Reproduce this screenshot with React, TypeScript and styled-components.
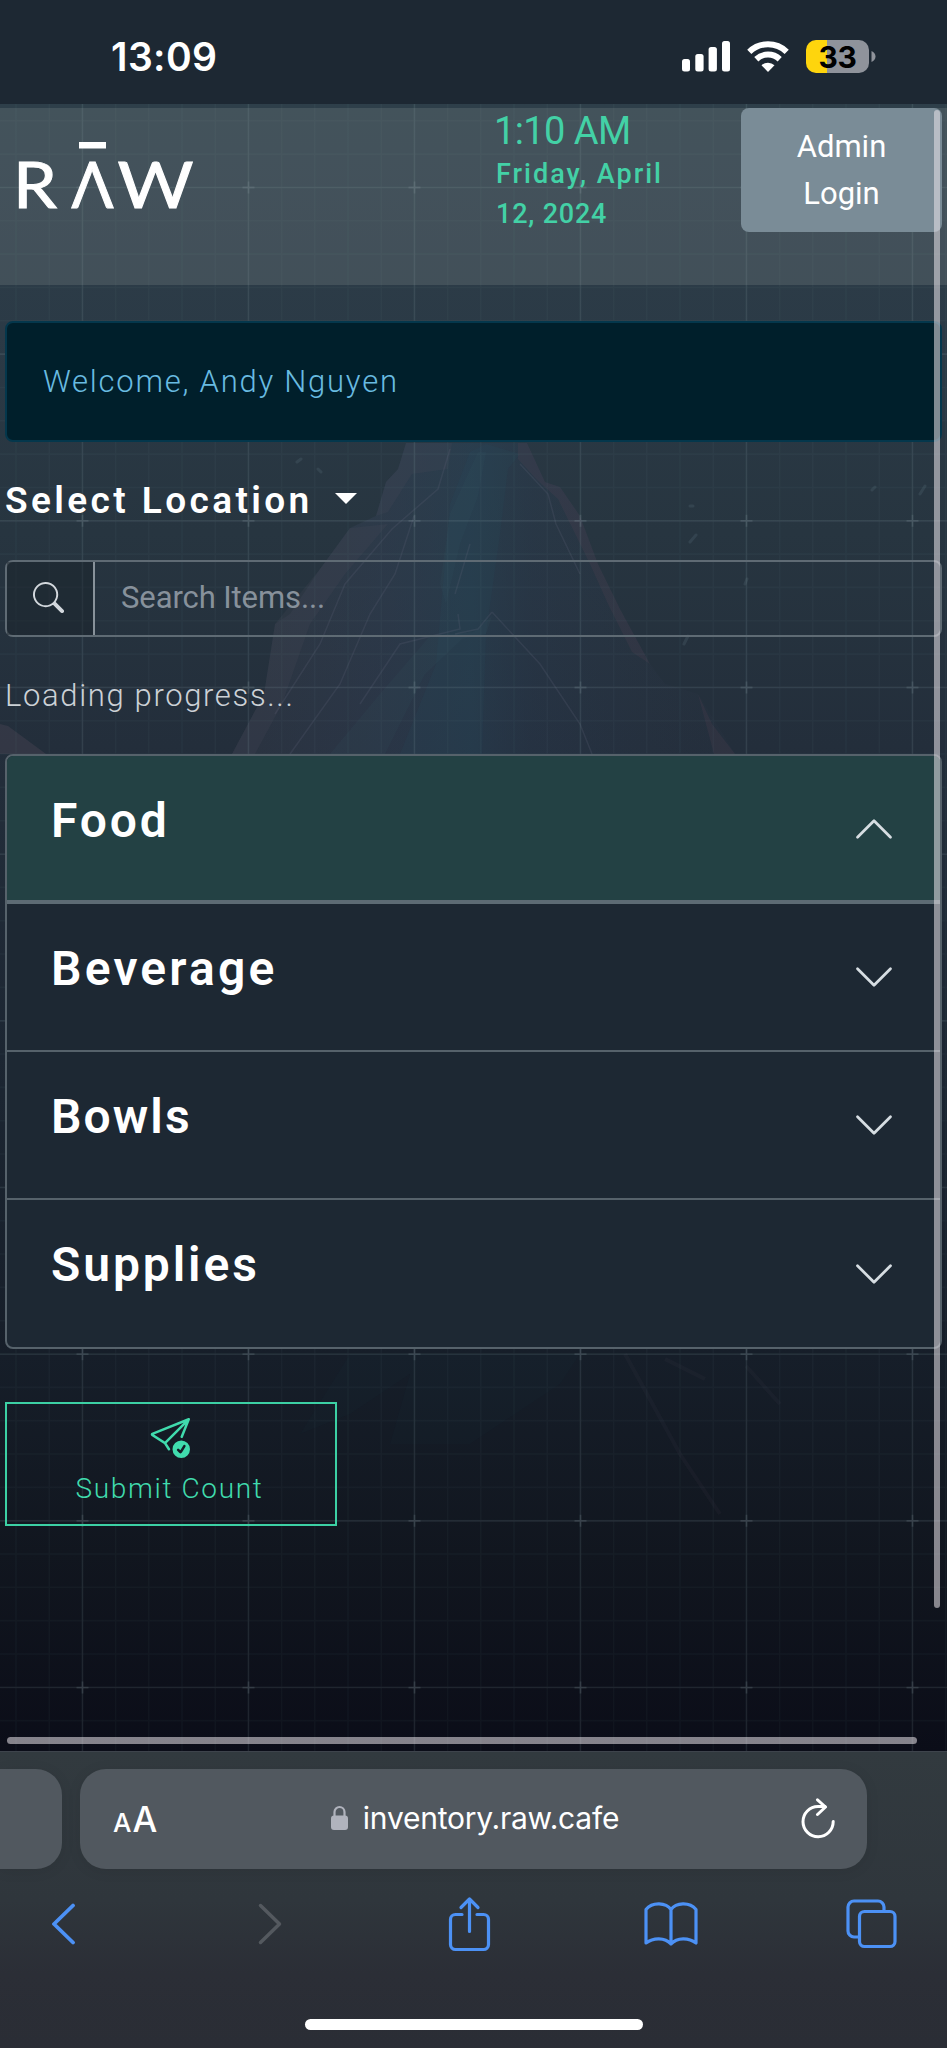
import React from "react";
import styled, { createGlobalStyle } from "styled-components";
import { BsSearch, BsSendCheck, BsChevronDown, BsChevronUp } from "react-icons/bs";

const GlobalStyle = createGlobalStyle`
  * { box-sizing: border-box; }
  body { margin: 0; background: #0c0f19; overflow: hidden; }
  p, h1, h2 { margin: 0; }
  button { font: inherit; border: 0; background: none; padding: 0; }
  svg { display: block; flex: none; }
`;

const Phone = styled.div`
  width: 947px;
  height: 2048px;
  display: flex;
  flex-direction: column;
  overflow: hidden;
  color: #fff;
  font-family: Roboto, "Liberation Sans", sans-serif;
`;

/* ---------- status bar ---------- */

const StatusBar = styled.header`
  height: 104px;
  flex: none;
  display: flex;
  align-items: center;
  padding: 8px 71px 0 111px;
  background: #1d2833;
  font-family: Inter, sans-serif;
`;

const StatusTime = styled.span`
  font-size: 39px;
  font-weight: 600;
  letter-spacing: 0.4px;
  line-height: 48px;
  margin: 2px auto 0 0;
`;

const StatusIcons = styled.div`
  display: flex;
  align-items: center;
  gap: 17px;
`;

const Battery = styled.div`
  display: flex;
  align-items: center;
  gap: 2px;
`;

const BatteryBody = styled.div`
  width: 63px;
  height: 33px;
  border-radius: 10px;
  background: linear-gradient(90deg, #fed50d 21px, #8f939b 21px);
  color: #000;
  font-size: 30px;
  font-weight: 700;
  letter-spacing: -0.4px;
  line-height: 34px;
  text-align: center;
`;

/* ---------- web page ---------- */

const Viewport = styled.main`
  position: relative;
  height: 1647px;
  flex: none;
  padding-top: 4px;
  overflow: hidden;
  background: linear-gradient(180deg, #2e3f4a 0%, #2b3a46 14%, #273540 26%, #232e3b 39%, #1b2531 60%, #161e29 76%, #11161f 88%, #0b0d18 100%);
`;

const Backdrop = styled.svg`
  position: absolute;
  inset: 0;
`;

const Page = styled.div`
  position: relative;
  display: flex;
  flex-direction: column;
`;

const NavBar = styled.nav`
  height: 177px;
  display: flex;
  align-items: flex-start;
  padding-right: 5px;
  background: rgba(145, 155, 155, 0.22);
`;

const Clock = styled.div`
  width: 180px;
  margin: 0 auto 0 294px;
  color: #43d1a6;
`;

const ClockTime = styled.p`
  font-size: 38px;
  line-height: 46px;
  letter-spacing: -0.6px;
  margin-left: -2px;
`;

const ClockDate = styled.p<{ $tight?: boolean }>`
  font-size: 27px;
  font-weight: 500;
  line-height: 40px;
  letter-spacing: ${(p) => (p.$tight ? "0.8px" : "2px")};
  white-space: nowrap;
`;

const AdminButton = styled.button`
  width: 201px;
  height: 124px;
  padding: 0 50px 1px;
  border-radius: 8px;
  background: #7a8c97;
  color: #fff;
  font-size: 31px;
  line-height: 47px;
`;

const Alert = styled.section`
  height: 121px;
  margin: 36px 5px 0;
  padding-left: 36px;
  display: flex;
  align-items: center;
  border: 2px solid #04374c;
  border-radius: 8px;
  background: #001f2b;
  color: #69bbe1;
  font-size: 31px;
  font-weight: 300;
  letter-spacing: 1.76px;
`;

const LocationSelect = styled.button`
  height: 60px;
  margin: 28px 5px 0;
  display: flex;
  align-items: center;
  gap: 22px;
  color: #fff;
  font-size: 37px;
  font-weight: 600;
  letter-spacing: 3.4px;
`;

const Caret = styled.span`
  border: 11px solid transparent;
  border-top-color: #fff;
  border-bottom: 0;
  margin-bottom: 3px;
`;

const SearchBox = styled.div`
  height: 77px;
  margin: 30px 5px 0;
  display: flex;
  border: 2px solid #5f6b74;
  border-radius: 8px;
  color: #87919b;
  font-size: 31px;
`;

const SearchIcon = styled.span`
  width: 88px;
  display: grid;
  place-items: center;
  padding-right: 3px;
  padding-bottom: 2px;
  border-right: 2px solid #88929a;
  background: rgba(25, 33, 41, 0.45);
  color: #d3d8dd;
`;

const SearchText = styled.span`
  padding-left: 26px;
  line-height: 72px;
  letter-spacing: -0.1px;
`;

const Progress = styled.p`
  height: 40px;
  margin: 39px 5px 0;
  color: #ccd1d6;
  font-size: 31px;
  font-weight: 300;
  line-height: 40px;
  letter-spacing: 1.65px;
`;

const Accordion = styled.section`
  margin: 38px 5px 0;
  border: 2px solid #56626b;
  border-radius: 8px;
  overflow: hidden;
  background: #1d2833;
`;

const AccordionRow = styled.div<{ $open?: boolean }>`
  height: 148px;
  padding: 0 44px;
  display: flex;
  align-items: center;
  justify-content: space-between;
  border-bottom: ${(p) => (p.$open ? "4px solid #5d6b74" : "2px solid #56626b")};
  background: ${(p) => (p.$open ? "#234144" : "transparent")};
  color: #d6dde2;

  &:first-child { padding-top: 2px; }
  &:last-child { height: 147px; border-bottom: 0; }
`;

const RowTitle = styled.h2<{ $spacing: number }>`
  color: #fff;
  font-size: 48px;
  font-weight: 600;
  line-height: 54px;
  margin-bottom: 17px;
  letter-spacing: ${(p) => p.$spacing}px;
`;

const SubmitButton = styled.button`
  width: 332px;
  height: 124px;
  margin: 53px 5px 0;
  display: flex;
  flex-direction: column;
  align-items: center;
  padding: 14px 3px 0 0;
  border: 2px solid #3cd0a4;
  color: #40dbad;
  font-size: 28px;
  font-weight: 300;
  line-height: 36px;
  letter-spacing: 1.65px;

  svg { margin-bottom: 13px; }
`;

const ScrollThumb = styled.div<{ $axis: "x" | "y" }>`
  position: absolute;
  border-radius: 4px;
  background: rgba(235, 230, 235, 0.55);
  ${(p) =>
    p.$axis === "y"
      ? "right: 7px; top: 6px; width: 6px; height: 1498px;"
      : "left: 7px; bottom: 7px; width: 910px; height: 7px;"}
`;

/* ---------- browser chrome ---------- */

const BrowserBar = styled.footer`
  height: 297px;
  flex: none;
  display: flex;
  flex-direction: column;
  border-top: 1px solid #3e444c;
  background: linear-gradient(180deg, #323a3f 0%, #2f363c 50%, #2b2e36 75%, #2a2d35 100%);
`;

const TabStrip = styled.div`
  display: flex;
  gap: 18px;
  margin-top: 17px;
`;

const NextTab = styled.div`
  width: 62px;
  height: 100px;
  border-radius: 0 26px 26px 0;
  background: #51585f;
  box-shadow: 0 2px 14px rgba(0, 0, 0, 0.08);
`;

const AddressBar = styled.div`
  width: 787px;
  height: 100px;
  display: flex;
  align-items: center;
  justify-content: space-between;
  padding: 0 32px 0 33px;
  border-radius: 26px;
  background: #51585f;
  box-shadow: 0 2px 14px rgba(0, 0, 0, 0.08);
  font-family: Inter, sans-serif;
`;

const TextSize = styled.span`
  width: 49px;
  display: flex;
  align-items: baseline;
  font-size: 35px;
  line-height: 40px;
  font-weight: 500;
  margin-top: 3px;

  small { font-size: 26px; margin-right: 1px; }
`;

const Url = styled.span`
  display: flex;
  align-items: center;
  gap: 15px;
  font-size: 30px;
  letter-spacing: -0.24px;
  line-height: 40px;
  margin: 0 13px 3px 0;
`;

const Toolbar = styled.div`
  display: grid;
  grid-template-columns: repeat(5, 202px);
  justify-content: center;
  justify-items: center;
  align-items: center;
  height: 64px;
  margin: 23px 0 0 -9px;
  color: #4c91f5;
`;

const HomeIndicator = styled.div`
  width: 338px;
  height: 11px;
  margin: 63px auto 0;
  border-radius: 6px;
  background: #fff;
`;

/* ---------- drawings ---------- */

const range = (start: number, step: number, end: number) => {
  const out: number[] = [];
  for (let v = start; v < end; v += step) out.push(v);
  return out;
};

const majorX = range(82.5, 166, 947);
const majorY = range(83.5, 166.67, 1647);

function GridBackdrop() {
  return (
    <Backdrop width="947" height="1647" viewBox="0 0 947 1647">
      <defs>
        <linearGradient id="rock" gradientUnits="userSpaceOnUse" x1="260" y1="470" x2="700" y2="470">
          <stop offset="0" stopColor="#46485a" stopOpacity=".2" />
          <stop offset=".28" stopColor="#3a4660" stopOpacity=".3" />
          <stop offset=".48" stopColor="#2c4a62" stopOpacity=".34" />
          <stop offset=".62" stopColor="#2c3c54" stopOpacity=".28" />
          <stop offset="1" stopColor="#30384a" stopOpacity=".12" />
        </linearGradient>
      </defs>
      <path
        d="M406 339 398 365 386 378 376 412 350 424 320 465 290 510 275 520 264 590 232 650H735L698 590 665 580 650 560 620 505 598 460 580 412 560 383 545 378 527 339Z"
        fill="url(#rock)"
      />
      <path d="M406 339 398 365 386 378 376 412 388 408 412 370 448 365 452 339ZM350 424 320 465 275 520 264 590 232 650H255L282 600 310 520 345 470 388 420Z" fill="#4b4a5c" opacity=".2" />
      <path d="M470 348 450 400 436 560 400 650H482L486 530 500 430 508 365 520 350 486 340Z" fill="#25586c" opacity=".1" />
      <path d="M478 348H486L478 392 460 440 446 500 440 480 450 410ZM492 512 474 528 430 532 380 590 330 650H385L425 570 462 535 486 530Z" fill="#3c6470" opacity=".1" />
      <path d="M527 339 545 378 560 383 580 412 598 460 620 505 650 560 632 548 608 500 590 460 558 395 536 375 518 355V339ZM698 590 712 620 735 650H714Z" fill="#65465a" opacity=".17" />
      <path d="M0 620 8 622 46 650H0Z" fill="#4c4654" opacity=".4" />
      <path
        d="M450 345 438 385 392 425 345 480 320 540 275 610M414 412 395 470 370 510 340 580 290 650M470 440 455 490M458 510 460 525 400 540 360 600M492 508 540 560 580 620 592 650M492 508 478 525 455 530M520 360 548 390 556 420 580 470"
        stroke="#5a6074"
        fill="none"
        opacity=".24"
        strokeWidth="1.5"
      />
      <path d="M297 358l4-3M318 365l3 3M684 540l4-8M690 438l6-7M690 402h3M745 480l2-5M920 390l5-8M872 386l3-3" stroke="#5a6f7c" opacity=".25" strokeWidth="3" strokeLinecap="round" />
      <path d="M625 1250 680 1350 720 1410M665 1255 705 1275M746 1262 780 1300" stroke="#8a7080" fill="none" strokeWidth="4" opacity=".05" />
      <path d="M350 1250 300 1330 350 1310 410 1270 390 1340 470 1340 560 1280 580 1250Z" fill="#2c6070" opacity=".03" />
      <path
        d={
          range(16, 33.2, 947).map((x) => `M${x} 0V1647`).join("") +
          range(16.8, 33.33, 1647).map((y) => `M0 ${y}H947`).join("")
        }
        stroke="rgba(150,175,190,0.045)"
        strokeWidth="1.6"
      />
      <path
        d={majorX.map((x) => `M${x} 0V1647`).join("") + majorY.map((y) => `M0 ${y}H947`).join("")}
        stroke="rgba(160,180,190,0.1)"
        strokeWidth="1.6"
      />
      <path
        d={majorX.map((x) => majorY.map((y) => `M${x - 6} ${y}h12M${x} ${y - 6}v12`).join("")).join("")}
        stroke="rgba(170,185,195,0.16)"
        strokeWidth="1.8"
      />
    </Backdrop>
  );
}

const Logo = styled.svg`
  margin: 22px 0 0 0;
  font-family: Lato, sans-serif;
`;

function RawLogo() {
  return (
    <Logo width="202" height="104" viewBox="0 130 202 104" fill="#fff" stroke="#fff" strokeWidth="1" fontSize="64">
      <rect x="79" y="142" width="27" height="6.5" stroke="none" />
      <text x="13" y="207.5" textLength="44" lengthAdjust="spacingAndGlyphs">R</text>
      <text x="71.5" y="207.5" textLength="42" lengthAdjust="spacingAndGlyphs">Λ</text>
      <text x="117.5" y="207.5" textLength="76" lengthAdjust="spacingAndGlyphs">W</text>
    </Logo>
  );
}

function SignalIcon() {
  return (
    <svg width="48" height="31" viewBox="0 0 48 31" fill="#fff">
      <rect x="0" y="18" width="8" height="12.5" rx="2.5" />
      <rect x="13.3" y="13" width="8.3" height="17.5" rx="2.5" />
      <rect x="26.6" y="6" width="8.3" height="24.5" rx="2.5" />
      <rect x="40" y="0" width="8" height="30.5" rx="2.5" />
    </svg>
  );
}

function WifiIcon() {
  return (
    <svg width="42" height="31" viewBox="0 0 42 31" fill="none" stroke="#fff">
      <path d="M2.3 10.8A27 27 0 0 1 39.7 10.8" strokeWidth="6" />
      <path d="M9.3 18.2A17 17 0 0 1 32.7 18.2" strokeWidth="6" />
      <path d="M21 31 14.5 24.3A9.5 9.5 0 0 1 27.5 24.3Z" fill="#fff" stroke="none" />
    </svg>
  );
}

function BatteryNub() {
  return (
    <svg width="5" height="11" viewBox="0 0 5 11">
      <path d="M.5 0C3 1 4.5 3 4.5 5.5S3 10 .5 11Z" fill="#8f939b" />
    </svg>
  );
}

function LockIcon() {
  return (
    <svg width="17" height="25" viewBox="0 0 17 25">
      <rect x="0" y="10.5" width="17" height="14.5" rx="3" fill="#b0b3bd" />
      <path d="M3.5 12V7a5 5 0 0 1 10 0V12" fill="none" stroke="#b0b3bd" strokeWidth="2.2" />
    </svg>
  );
}

function ReloadIcon() {
  return (
    <svg width="34" height="43" viewBox="0 0 34 43" fill="none" stroke="#fff" strokeWidth="3" strokeLinecap="round" strokeLinejoin="round">
      <path d="M32.2 23.5A15.1 15.1 0 1 1 17 8.5H24" />
      <path d="M16.5 1.8 24.5 9 16.5 16.5" />
    </svg>
  );
}

const stroke = { fill: "none", stroke: "currentColor", strokeWidth: 3.2, strokeLinecap: "round", strokeLinejoin: "round" } as const;

function BackIcon() {
  return (
    <svg width="26" height="42" viewBox="1.5 0 26 42" {...stroke}>
      <path d="M22.5 2.5 3.5 21 22.5 39.5" strokeWidth="3.8" />
    </svg>
  );
}

function ForwardIcon() {
  return (
    <svg width="26" height="42" viewBox="-3 0 26 42" overflow="visible" {...stroke} stroke="#54595f">
      <path d="M3.5 2.5 22.5 21 3.5 39.5" strokeWidth="3.5" />
    </svg>
  );
}

function ShareIcon() {
  return (
    <svg width="43" height="56" viewBox="0 0 43 56" {...stroke}>
      <path d="M14 18.5H7.5a5 5 0 0 0-5 5V48.5a5 5 0 0 0 5 5H35.5a5 5 0 0 0 5-5V23.5a5 5 0 0 0-5-5H29" />
      <path d="M21.5 35.5V3.5M13 11.5 21.5 3 30 11.5" />
    </svg>
  );
}

function BookIcon() {
  return (
    <svg width="54" height="46" viewBox="0 0 54 46" {...stroke}>
      <path d="M27 8.5C22 1.5 8.5 .5 2 8.5V42C9 36.500 21 36 27 43 33 36 45 36.500 52 42V8.5C45.5 .5 32 1.5 27 8.5ZM27 8.5V43" />
    </svg>
  );
}

function TabsIcon() {
  return (
    <svg width="55" height="50" viewBox="0 0 55 50" {...stroke}>
      <path d="M12.5 38H8A6 6 0 0 1 2 32V8A6 6 0 0 1 8 2H32A6 6 0 0 1 38 8V12.5" />
      <rect x="13.5" y="12.5" width="35.5" height="35" rx="5" />
    </svg>
  );
}

/* ---------- screen ---------- */

const categories = [
  { name: "Food", spacing: 2.8, open: true },
  { name: "Beverage", spacing: 3.2 },
  { name: "Bowls", spacing: 2.1 },
  { name: "Supplies", spacing: 2.9 },
];

export default function App() {
  return (
    <Phone>
      <GlobalStyle />
      <StatusBar>
        <StatusTime>13:09</StatusTime>
        <StatusIcons>
          <SignalIcon />
          <WifiIcon />
          <Battery>
            <BatteryBody>33</BatteryBody>
            <BatteryNub />
          </Battery>
        </StatusIcons>
      </StatusBar>

      <Viewport>
        <GridBackdrop />
        <Page>
          <NavBar>
            <RawLogo />
            <Clock>
              <ClockTime>1:10 AM</ClockTime>
              <ClockDate>Friday, April</ClockDate>
              <ClockDate $tight>12, 2024</ClockDate>
            </Clock>
            <AdminButton>Admin Login</AdminButton>
          </NavBar>
          <Alert>Welcome, Andy Nguyen</Alert>
          <LocationSelect>
            Select Location
            <Caret />
          </LocationSelect>
          <SearchBox>
            <SearchIcon>
              <BsSearch size={31} />
            </SearchIcon>
            <SearchText>Search Items...</SearchText>
          </SearchBox>
          <Progress>Loading progress...</Progress>
          <Accordion>
            {categories.map((c) => (
              <AccordionRow key={c.name} $open={c.open}>
                <RowTitle $spacing={c.spacing}>{c.name}</RowTitle>
                {c.open ? <BsChevronUp size={44} /> : <BsChevronDown size={44} />}
              </AccordionRow>
            ))}
          </Accordion>
          <SubmitButton>
            <BsSendCheck size={40} />
            Submit Count
          </SubmitButton>
        </Page>
        <ScrollThumb $axis="y" />
        <ScrollThumb $axis="x" />
      </Viewport>

      <BrowserBar>
        <TabStrip>
          <NextTab />
          <AddressBar>
            <TextSize>
              <small>A</small>A
            </TextSize>
            <Url>
              <LockIcon />
              inventory.raw.cafe
            </Url>
            <ReloadIcon />
          </AddressBar>
        </TabStrip>
        <Toolbar>
          <BackIcon />
          <ForwardIcon />
          <ShareIcon />
          <BookIcon />
          <TabsIcon />
        </Toolbar>
        <HomeIndicator />
      </BrowserBar>
    </Phone>
  );
}
